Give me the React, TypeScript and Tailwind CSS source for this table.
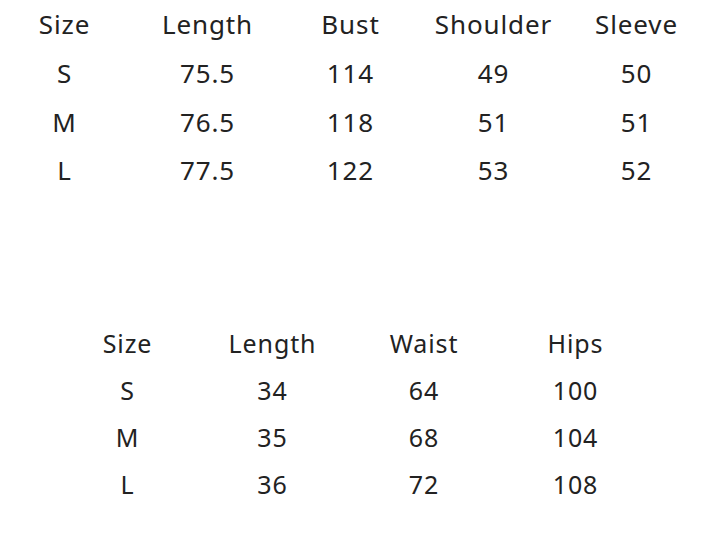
import React from 'react';

const topHead = ['Size', 'Length', 'Bust', 'Shoulder', 'Sleeve'];
const topRows = [
    ['S', '75.5', '114', '49', '50'],
    ['M', '76.5', '118', '51', '51'],
    ['L', '77.5', '122', '53', '52'],
];

const bottomHead = ['Size', 'Length', 'Waist', 'Hips'];
const bottomRows = [
    ['S', '34', '64', '100'],
    ['M', '35', '68', '104'],
    ['L', '36', '72', '108'],
];

export default function App() {
    return (
        <div
            className="w-[727px] h-[540px] bg-white text-[#222222] overflow-hidden"
            style={{ fontFamily: '"Noto Sans", sans-serif' }}
        >
            {/* upper table */}
            <div className="-ml-[7px] grid grid-cols-[143px_143px_143px_143px_143px] text-[26px] tracking-[0.9px]">
                {[topHead, ...topRows].map((row, i) =>
                    row.map((cell, j) => (
                        <div key={`${i}-${j}`} className="h-[48.7px] flex items-center justify-center leading-none">
                            {cell}
                        </div>
                    ))
                )}
            </div>

            {/* lower table */}
            <div className="mt-[125px] ml-[55px] grid grid-cols-[145px_145px_158px_145px] text-[25px] tracking-[0.9px]">
                {[bottomHead, ...bottomRows].map((row, i) =>
                    row.map((cell, j) => (
                        <div key={`${i}-${j}`} className="h-[47px] flex items-center justify-center leading-none">
                            {cell}
                        </div>
                    ))
                )}
            </div>
        </div>
    );
}
